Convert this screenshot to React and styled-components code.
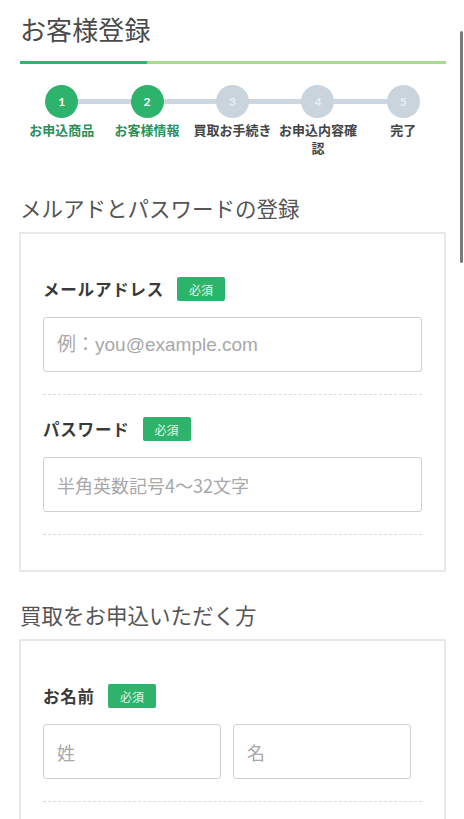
import React from "react";
import styled, { createGlobalStyle } from "styled-components";

const Global = createGlobalStyle`
  html, body { margin: 0; padding: 0; background: #fff; }
  body { font-family: "Noto Sans CJK JP", "Noto Sans", sans-serif; color: #333; }
  * { box-sizing: border-box; }
`;

const Page = styled.div`
  padding: 0 18px 0 19px;
  width: 464px;
  position: relative;
`;

const Title = styled.h1`
  margin: 0;
  padding-top: 11px;
  height: 50px;
  font-size: 26px;
  font-weight: 400;
  color: #4a4a4a;
  line-height: 36px;
  padding-left: 1px;
  letter-spacing: 0.1px;
`;

const Progress = styled.div`
  display: flex;
  height: 3px;
  margin: 11px 0 0 1px;
  background: #a6dd8a;
`;

const ProgressDone = styled.div`
  width: 127px;
  background: #2fb36f;
`;

const Steps = styled.ol`
  list-style: none;
  margin: 0;
  padding: 21px 0 0 0;
  display: grid;
  grid-template-columns: repeat(5, 1fr);
  height: 129px;
`;

const Step = styled.li`
  position: relative;
  display: flex;
  flex-direction: column;
  align-items: center;
  &::after {
    content: "";
    display: ${(p) => (p.$last ? "none" : "block")};
    position: absolute;
    top: 14px;
    left: 50%;
    width: 100%;
    height: 5px;
    background: #cdd7df;
    z-index: 0;
  }
`;

const Circle = styled.div`
  position: relative;
  z-index: 1;
  width: 33px;
  height: 33px;
  border-radius: 50%;
  background: ${(p) => (p.$active ? "#2db36c" : "#c9d4dd")};
  color: ${(p) => (p.$active ? "#fff" : "#e9eef2")};
  font-family: "Lato", sans-serif;
  font-weight: 700;
  font-size: 12px;
  display: flex;
  align-items: center;
  justify-content: center;
`;

const StepLabel = styled.div`
  margin-top: 3px;
  font-size: 13px;
  font-weight: 700;
  line-height: 18px;
  text-align: center;
  color: ${(p) => (p.$active ? "#2a8f58" : "#444")};
  white-space: ${(p) => (p.$wrap ? "normal" : "nowrap")};
  width: ${(p) => (p.$wrap ? "82px" : "auto")};
`;

const SectionTitle = styled.h2`
  margin: 0;
  padding-left: 1px;
  font-size: 21.5px;
  font-weight: 400;
  color: #555;
  line-height: 30px;
  height: 39px;
`;

const Card = styled.div`
  border: 2px solid #e8e8e8;
  border-radius: 1px;
  padding: 43px 22px ${(p) => p.$pb || 35}px 22px;
  margin-bottom: ${(p) => p.$mb || 0}px;
`;

const Field = styled.div`
  padding-bottom: 22px;
  border-bottom: 1px dashed #dcdcdc;
  & + & {
    margin-top: 22px;
  }
`;

const LabelRow = styled.div`
  display: flex;
  align-items: center;
  gap: 13px;
  height: 24px;
  margin-bottom: 16px;
`;

const Label = styled.span`
  font-size: 16.5px;
  font-weight: 700;
  color: #3a3a3a;
  letter-spacing: 0.8px;
`;

const Badge = styled.span`
  display: inline-flex;
  align-items: center;
  justify-content: center;
  width: 48px;
  height: 24px;
  border-radius: 2px;
  background: #2db36c;
  color: #e3f5ea;
  font-size: 12px;
  font-weight: 400;
`;

const InputRow = styled.div`
  display: flex;
  gap: 12px;
`;

const Input = styled.input`
  display: block;
  width: ${(p) => p.$w || "100%"};
  height: 55px;
  border: 1px solid #d0d0d0;
  border-radius: 3px;
  padding: 0 13px;
  font-family: "Noto Sans CJK JP", "Noto Sans", sans-serif;
  font-size: 18px;
  color: #333;
  outline: none;
  background: #fff;
  &::placeholder {
    color: #a8a8a8;
  }
`;

const EmailInput = styled(Input)`
  font-family: "Liberation Sans", "Noto Sans CJK JP", sans-serif;
  font-size: 19px;
  &::placeholder {
    font-family: "Liberation Sans", "Noto Sans CJK JP", sans-serif;
  }
`;

const Scrollbar = styled.div`
  position: fixed;
  top: 31px;
  right: 1px;
  width: 3px;
  height: 232px;
  border-radius: 2px;
  background: #7a7a7a;
`;

const steps = [
  { n: 1, label: "お申込商品", active: true },
  { n: 2, label: "お客様情報", active: true },
  { n: 3, label: "買取お手続き" },
  { n: 4, label: "お申込内容確認", wrap: true },
  { n: 5, label: "完了" },
];

export default function App() {
  return (
    <>
      <Global />
      <Page>
        <Title>お客様登録</Title>
        <Progress>
          <ProgressDone />
        </Progress>
        <Steps>
          {steps.map((s, i) => (
            <Step key={s.n} $last={i === steps.length - 1}>
              <Circle $active={s.active}>{s.n}</Circle>
              <StepLabel $active={s.active} $wrap={s.wrap}>
                {s.label}
              </StepLabel>
            </Step>
          ))}
        </Steps>
        <SectionTitle>メルアドとパスワードの登録</SectionTitle>
        <Card $mb={28}>
          <Field>
            <LabelRow>
              <Label>メールアドレス</Label>
              <Badge>必須</Badge>
            </LabelRow>
            <EmailInput placeholder="例：you@example.com" />
          </Field>
          <Field>
            <LabelRow>
              <Label>パスワード</Label>
              <Badge>必須</Badge>
            </LabelRow>
            <Input placeholder="半角英数記号4〜32文字" />
          </Field>
        </Card>
        <SectionTitle>買取をお申込いただく方</SectionTitle>
        <Card $pb={60}>
          <Field>
            <LabelRow>
              <Label>お名前</Label>
              <Badge>必須</Badge>
            </LabelRow>
            <InputRow>
              <Input $w="178px" placeholder="姓" />
              <Input $w="178px" placeholder="名" />
            </InputRow>
          </Field>
        </Card>
      </Page>
      <Scrollbar />
    </>
  );
}
